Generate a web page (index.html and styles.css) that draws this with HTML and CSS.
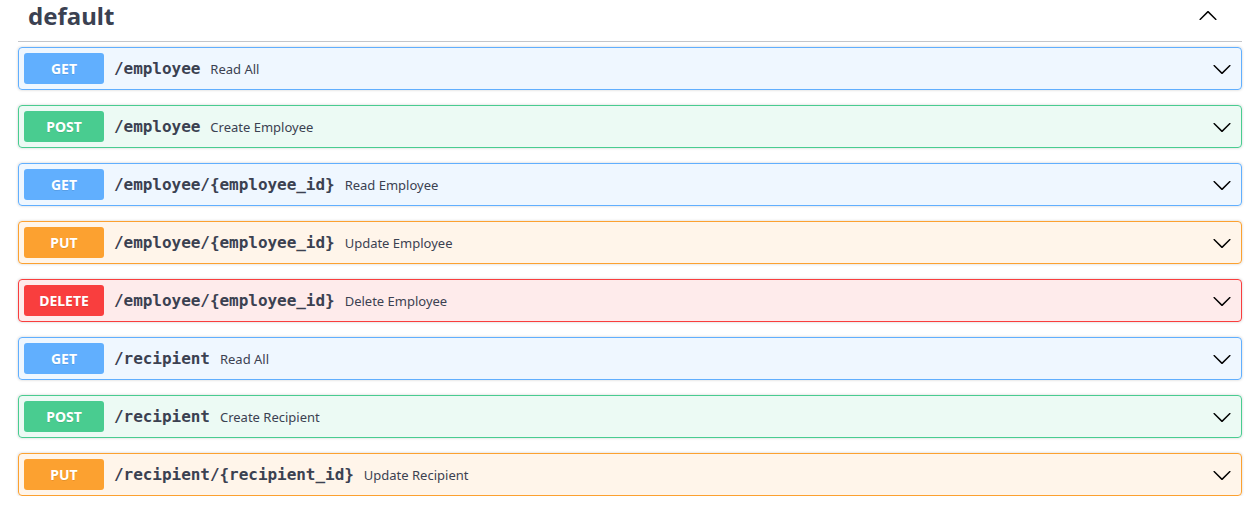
FILE: index.html
```html
<!DOCTYPE html>
<html>
<head>
<meta charset="utf-8">
<link rel="stylesheet" href="styles.css">
</head>
<body>
<div class="wrapper">
  <h3 class="tag">
    <span class="tag-name">default</span>
    <svg class="tag-arrow" width="20" height="20" viewBox="0 0 20 20"><path d="M17.418 13.891c.272.268.709.268.979 0s.271-.701 0-.969l-7.908-7.83c-.27-.268-.707-.268-.979 0l-7.908 7.83c-.27.268-.27.701 0 .969.271.268.709.268.979 0L10 6.75l7.418 7.141z"/></svg>
  </h3>
  <div class="ops">
    <div class="op get"><span class="method">GET</span><span class="path">/employee</span><span class="desc">Read All</span><svg class="arrow" width="20" height="20" viewBox="0 0 20 20"><path d="M17.418 6.109c.272-.268.709-.268.979 0s.271.701 0 .969l-7.908 7.83c-.27.268-.707.268-.979 0l-7.908-7.83c-.27-.268-.27-.701 0-.969.271-.268.709-.268.979 0L10 13.25l7.418-7.141z"/></svg></div>
    <div class="op post"><span class="method">POST</span><span class="path">/employee</span><span class="desc">Create Employee</span><svg class="arrow" width="20" height="20" viewBox="0 0 20 20"><path d="M17.418 6.109c.272-.268.709-.268.979 0s.271.701 0 .969l-7.908 7.83c-.27.268-.707.268-.979 0l-7.908-7.83c-.27-.268-.27-.701 0-.969.271-.268.709-.268.979 0L10 13.25l7.418-7.141z"/></svg></div>
    <div class="op get"><span class="method">GET</span><span class="path">/employee/{employee_id}</span><span class="desc">Read Employee</span><svg class="arrow" width="20" height="20" viewBox="0 0 20 20"><path d="M17.418 6.109c.272-.268.709-.268.979 0s.271.701 0 .969l-7.908 7.83c-.27.268-.707.268-.979 0l-7.908-7.83c-.27-.268-.27-.701 0-.969.271-.268.709-.268.979 0L10 13.25l7.418-7.141z"/></svg></div>
    <div class="op put"><span class="method">PUT</span><span class="path">/employee/{employee_id}</span><span class="desc">Update Employee</span><svg class="arrow" width="20" height="20" viewBox="0 0 20 20"><path d="M17.418 6.109c.272-.268.709-.268.979 0s.271.701 0 .969l-7.908 7.83c-.27.268-.707.268-.979 0l-7.908-7.83c-.27-.268-.27-.701 0-.969.271-.268.709-.268.979 0L10 13.25l7.418-7.141z"/></svg></div>
    <div class="op delete"><span class="method">DELETE</span><span class="path">/employee/{employee_id}</span><span class="desc">Delete Employee</span><svg class="arrow" width="20" height="20" viewBox="0 0 20 20"><path d="M17.418 6.109c.272-.268.709-.268.979 0s.271.701 0 .969l-7.908 7.83c-.27.268-.707.268-.979 0l-7.908-7.83c-.27-.268-.27-.701 0-.969.271-.268.709-.268.979 0L10 13.25l7.418-7.141z"/></svg></div>
    <div class="op get"><span class="method">GET</span><span class="path">/recipient</span><span class="desc">Read All</span><svg class="arrow" width="20" height="20" viewBox="0 0 20 20"><path d="M17.418 6.109c.272-.268.709-.268.979 0s.271.701 0 .969l-7.908 7.83c-.27.268-.707.268-.979 0l-7.908-7.83c-.27-.268-.27-.701 0-.969.271-.268.709-.268.979 0L10 13.25l7.418-7.141z"/></svg></div>
    <div class="op post"><span class="method">POST</span><span class="path">/recipient</span><span class="desc">Create Recipient</span><svg class="arrow" width="20" height="20" viewBox="0 0 20 20"><path d="M17.418 6.109c.272-.268.709-.268.979 0s.271.701 0 .969l-7.908 7.83c-.27.268-.707.268-.979 0l-7.908-7.83c-.27-.268-.27-.701 0-.969.271-.268.709-.268.979 0L10 13.25l7.418-7.141z"/></svg></div>
    <div class="op put"><span class="method">PUT</span><span class="path">/recipient/{recipient_id}</span><span class="desc">Update Recipient</span><svg class="arrow" width="20" height="20" viewBox="0 0 20 20"><path d="M17.418 6.109c.272-.268.709-.268.979 0s.271.701 0 .969l-7.908 7.83c-.27.268-.707.268-.979 0l-7.908-7.83c-.27-.268-.27-.701 0-.969.271-.268.709-.268.979 0L10 13.25l7.418-7.141z"/></svg></div>
  </div>
</div>
</body>
</html>
```
FILE: styles.css
```css
html, body {
  margin: 0;
  padding: 0;
  background: #fff;
}
.wrapper {
  width: 1224px;
  padding-left: 18px;
  font-family: "Noto Sans", sans-serif;
  color: #3b4151;
}
.tag {
  display: flex;
  align-items: center;
  margin: 0 0 5px;
  padding: 0 20px 10px 10px;
  border-bottom: 1px solid rgba(59, 65, 81, 0.3);
  font-size: 24px;
  font-weight: 700;
  line-height: 31px;
  color: #3b4151;
}
.tag-name {
  flex: 1;
}
.tag-arrow {
  margin-right: 4px;
  fill: #000;
}
.ops {
  display: flex;
  flex-direction: column;
  gap: 15px;
}
.op {
  display: flex;
  align-items: center;
  padding: 5px;
  border: 1px solid #000;
  border-radius: 4px;
  box-shadow: 0 0 3px rgba(0, 0, 0, 0.19);
}
.method {
  min-width: 80px;
  padding: 6px 0;
  border-radius: 3px;
  font-size: 14px;
  font-weight: 700;
  line-height: 19px;
  text-align: center;
  color: #fff;
  text-shadow: 0 1px 0 rgba(0, 0, 0, 0.1);
}
.path {
  padding: 0 10px;
  font-family: "DejaVu Sans Mono", monospace;
  font-size: 16px;
  font-weight: 700;
  letter-spacing: -0.04px;
  color: #3b4151;
}
.desc {
  flex: 1;
  font-size: 13px;
  color: #3b4151;
}
.arrow {
  margin-right: 4px;
  fill: #000;
}
.get { background: rgba(97, 175, 254, 0.1); border-color: #61affe; }
.get .method { background: #61affe; }
.post { background: rgba(73, 204, 144, 0.1); border-color: #49cc90; }
.post .method { background: #49cc90; }
.put { background: rgba(252, 161, 48, 0.1); border-color: #fca130; }
.put .method { background: #fca130; }
.delete { background: rgba(249, 62, 62, 0.1); border-color: #f93e3e; }
.delete .method { background: #f93e3e; }
```
